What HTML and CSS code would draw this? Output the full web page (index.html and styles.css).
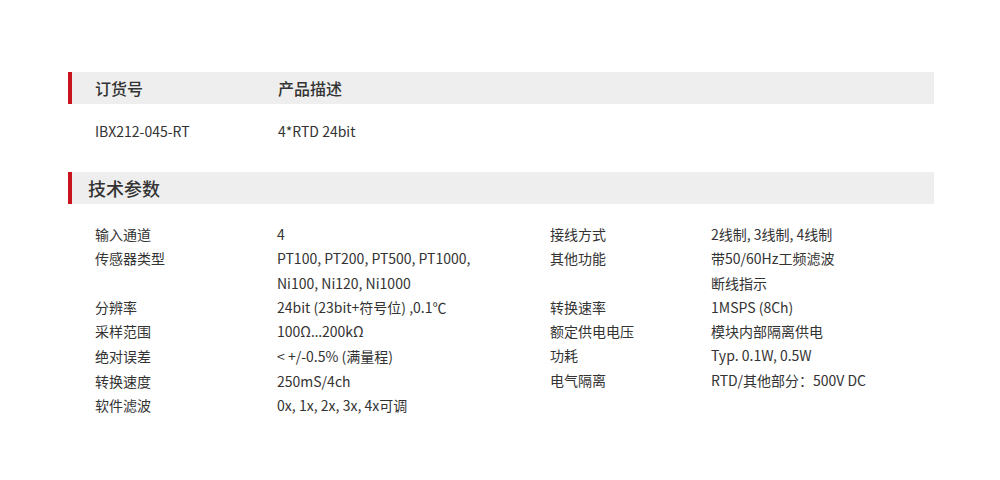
FILE: index.html
```html
<!DOCTYPE html>
<html lang="zh">
<head>
<meta charset="utf-8">
<link rel="stylesheet" href="styles.css">
</head>
<body>
<div class="page">
  <div class="bar order-head">
    <div class="col-a">订货号</div>
    <div class="col-b">产品描述</div>
  </div>
  <div class="order-row">
    <div class="col-a">IBX212-045-RT</div>
    <div class="col-b">4*RTD 24bit</div>
  </div>
  <div class="bar tech-head">技术参数</div>
  <div class="specs">
    <dl class="spec-col left">
      <dt>输入通道</dt><dd>4</dd>
      <dt>传感器类型</dt><dd>PT100, PT200, PT500, PT1000,<br>Ni100, Ni120, Ni1000</dd>
      <dt>分辨率</dt><dd>24bit (23bit+符号位) ,0.1℃</dd>
      <dt>采样范围</dt><dd>100Ω<span class="latin">…</span>200kΩ</dd>
      <dt>绝对误差</dt><dd>&lt; +/-0.5% (满量程)</dd>
      <dt>转换速度</dt><dd>250mS/4ch</dd>
      <dt>软件滤波</dt><dd>0x, 1x, 2x, 3x, 4x可调</dd>
    </dl>
    <dl class="spec-col right">
      <dt>接线方式</dt><dd>2线制, 3线制, 4线制</dd>
      <dt>其他功能</dt><dd>带50/60Hz工频滤波<br>断线指示</dd>
      <dt>转换速率</dt><dd>1MSPS (8Ch)</dd>
      <dt>额定供电电压</dt><dd>模块内部隔离供电</dd>
      <dt>功耗</dt><dd>Typ. 0.1W, 0.5W</dd>
      <dt>电气隔离</dt><dd>RTD/其他部分：500V DC</dd>
    </dl>
  </div>
</div>
</body>
</html>
```

FILE: styles.css
```css
* { box-sizing: border-box; }
html, body { margin: 0; padding: 0; background: #fff; }
body {
  font-family: "Noto Sans CJK SC", "Noto Sans", sans-serif;
  color: #333;
  font-size: 14px;
}
.page {
  width: 866px;
  margin: 72px 0 0 68px;
}
.bar {
  height: 32px;
  background: #eeeeee;
  border-left: 4px solid #c8151d;
  display: flex;
  align-items: center;
  font-weight: 500;
}
.order-head {
  padding-left: 23px;
  font-size: 16px;
}
.col-a { width: 183px; }
.order-row {
  display: flex;
  padding: 15px 0 29px 27px;
  line-height: 24px;
}
.tech-head {
  padding-left: 16px;
  font-size: 18px;
}
.specs {
  display: flex;
  align-items: flex-start;
  padding: 18px 0 0 27px;
}
.spec-col {
  margin: 0;
  display: grid;
  align-content: start;
  line-height: 24.3px;
}
.spec-col dt, .spec-col dd { margin: 0; }
.left { grid-template-columns: 182px 273px; }
.right { grid-template-columns: 161px 200px; }
.latin { font-family: "Noto Sans", sans-serif; }
```
